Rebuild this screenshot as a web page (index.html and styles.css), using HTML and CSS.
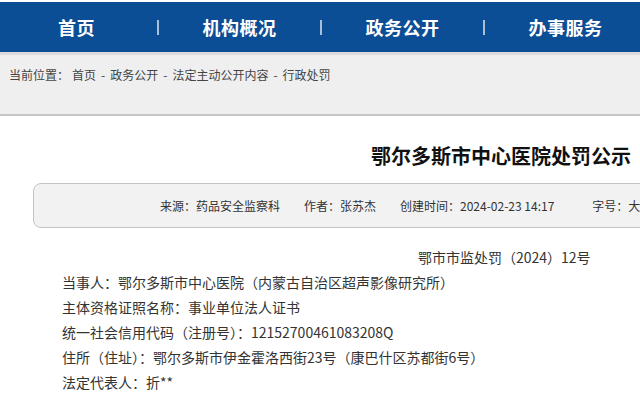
FILE: index.html
```html
<!DOCTYPE html>
<html lang="zh-CN">
<head>
<meta charset="utf-8">
<title>鄂尔多斯市中心医院处罚公示</title>
<link rel="stylesheet" href="styles.css">
</head>
<body>
<div class="page">
  <nav class="nav">
    <a class="nav-item">首页</a><span class="nav-sep"></span>
    <a class="nav-item">机构概况</a><span class="nav-sep"></span>
    <a class="nav-item">政务公开</a><span class="nav-sep"></span>
    <a class="nav-item">办事服务</a>
  </nav>
  <div class="crumb">当前位置：<span class="crumb-first">首页</span><span class="crumb-sep">-</span>政务公开<span class="crumb-sep">-</span>法定主动公开内容<span class="crumb-sep">-</span>行政处罚</div>
  <h1 class="title">鄂尔多斯市中心医院处罚公示</h1>
  <div class="meta">
    <span class="meta-item">来源：药品安全监察科</span>
    <span class="meta-item">作者：张苏杰</span>
    <span class="meta-item">创建时间：2024-02-23 14:17</span>
    <span class="meta-item meta-size">字号：大</span>
  </div>
  <div class="content">
    <p class="docno">鄂市市监处罚（2024）12号</p>
    <p>当事人：鄂尔多斯市中心医院（内蒙古自治区超声影像研究所）</p>
    <p>主体资格证照名称：事业单位法人证书</p>
    <p>统一社会信用代码（注册号）：12152700461083208Q</p>
    <p>住所（住址）：鄂尔多斯市伊金霍洛西街23号（康巴什区苏都街6号）</p>
    <p>法定代表人：折**</p>
  </div>
</div>
</body>
</html>
```
FILE: styles.css
```css
html, body {
  margin: 0;
  padding: 0;
  background: #ffffff;
  overflow: hidden;
}
.page {
  width: 640px;
  height: 399px;
  overflow: hidden;
  font-family: "Noto Sans CJK SC", "Noto Sans", sans-serif;
  color: #333333;
  padding-top: 2px;
}
.nav {
  display: flex;
  align-items: center;
  height: 50px;
  background: #0c4e96;
  border-bottom: 3px solid #dcdcdc;
  margin-left: -4px;
  width: 700px;
}
.nav-item {
  width: 161px;
  text-align: center;
  color: #ffffff;
  font-size: 18px;
  font-weight: bold;
  line-height: 24px;
  letter-spacing: 0.5px;
}
.nav-sep {
  width: 2px;
  height: 15px;
  background: #a9bfd9;
}
.crumb {
  height: 61px;
  box-sizing: border-box;
  padding: 12px 0 0 9px;
  background: #efefef;
  border-bottom: 2px solid #c6c6c6;
  font-size: 12px;
  line-height: 16px;
  color: #444444;
  white-space: nowrap;
}
.crumb-first {
  margin-left: 3px;
}
.crumb-sep {
  margin: 0 5px;
}
.title {
  margin: 26px 0 0;
  padding-left: 371px;
  font-size: 20px;
  line-height: 28px;
  font-weight: bold;
  color: #111111;
  white-space: nowrap;
}
.meta {
  display: flex;
  align-items: center;
  margin: 13px 0 0 33px;
  width: 700px;
  height: 45px;
  box-sizing: border-box;
  padding-left: 126px;
  gap: 24px;
  background: #f2f2f2;
  border: 1px solid #c4c4c4;
  border-radius: 8px;
  font-size: 12px;
  color: #333333;
  white-space: nowrap;
}
.meta-size {
  margin-left: 14px;
}
.content {
  margin-top: 17px;
  padding-left: 62px;
  font-size: 14px;
  line-height: 25px;
  color: #333333;
  white-space: nowrap;
}
.content p {
  margin: 0;
}
.content .docno {
  padding-left: 356px;
}
```
